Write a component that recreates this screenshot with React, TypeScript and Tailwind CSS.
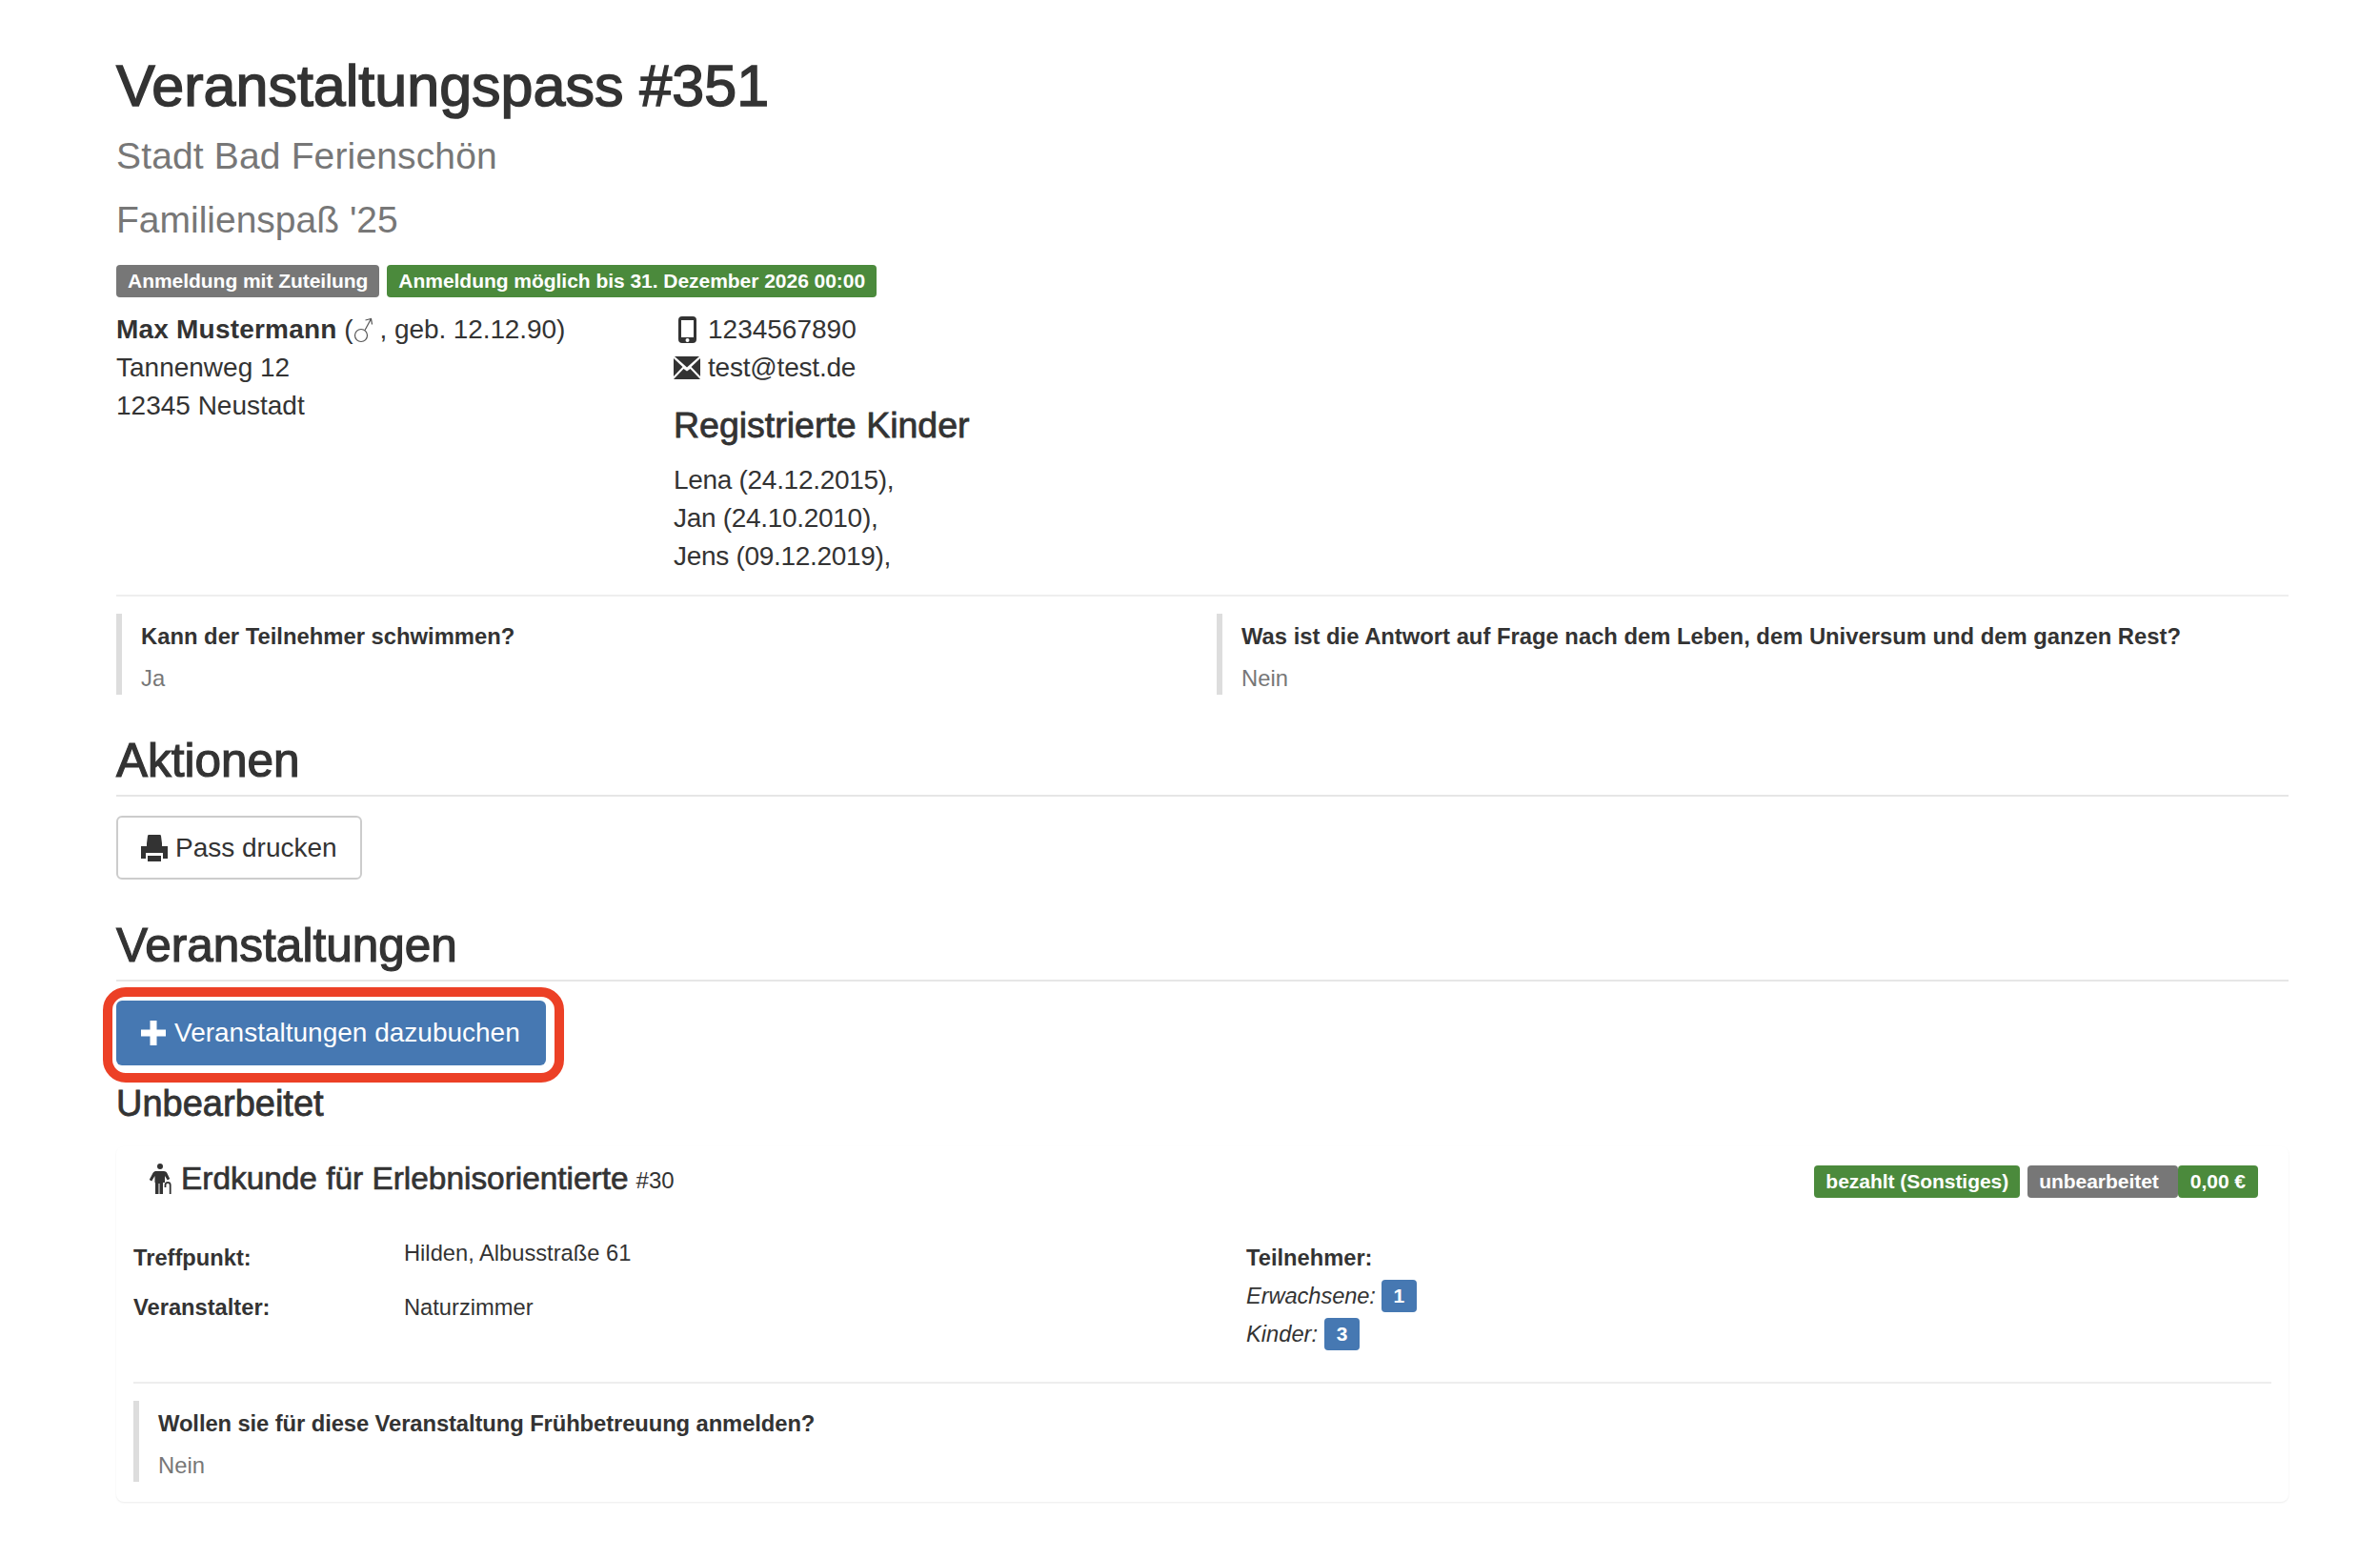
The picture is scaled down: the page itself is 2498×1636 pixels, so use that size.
const sans = "font-['Liberation_Sans',Arial,sans-serif]";

function PhoneIcon() {
    return (
        <svg viewBox="0 0 19 28" className="h-[28px] w-[19px] shrink-0" fill="#333">
            <path
                fillRule="evenodd"
                d="M4 0h11a4 4 0 0 1 4 4v20a4 4 0 0 1-4 4H4a4 4 0 0 1-4-4V4a4 4 0 0 1 4-4zM3 4v18h13V4zM9.500 23a2 2 0 1 0 0 4 2 2 0 0 0 0-4z"
            />
        </svg>
    );
}

function MailIcon() {
    return (
        <svg viewBox="0 0 28 24" className="h-[24px] w-[28px] shrink-0" fill="#333">
            <path d="M1 0h26L14 11.500z" />
            <path d="M0 2v19l9.500-10z" />
            <path d="M28 2v19l-9.500-10z" />
            <path d="M0 24h28L17.500 13 14 15.500 10.500 13z" />
        </svg>
    );
}

function MaleIcon() {
    return (
        <svg viewBox="0 0 20 28" className="inline-block h-[28px] w-[20px] align-[-6px]" fill="none" stroke="#555" strokeWidth="1.200">
            <circle cx="8" cy="19" r="6.500" />
            <path d="M12 13.500 18.500 1.500M12.500 3l6-1.500 1 6" />
        </svg>
    );
}

function PrintIcon() {
    return (
        <svg viewBox="0 0 28 28" className="h-[28px] w-[28px] shrink-0" fill="#333">
            <path d="M8.500 0h11c.8 0 1.400.5 1.500 1.300L22 9v3h6v13h-5v-6H5v6H0V12h6V9l1-7.700C7.100.5 7.700 0 8.500 0z" />
            <path d="M7 22h14v6H7z" />
        </svg>
    );
}

function PlusIcon() {
    return (
        <svg viewBox="0 0 26 26" className="h-[26px] w-[26px] shrink-0" fill="#fff">
            <path d="M9.500 0h7v9.500H26v7h-9.500V26h-7v-9.500H0v-7h9.500z" />
        </svg>
    );
}

function PersonCaneIcon() {
    return (
        <svg viewBox="0 0 24 32" className="h-[32px] w-[24px] shrink-0" fill="#333">
            <circle cx="12" cy="3" r="3" />
            <path d="M8 8h8c1.500 0 2.500.7 3.200 1.800l3 6.200-2.400 1.400L17 13v7h-2v12h-3.500V21h-1v11H7V20H6.500v-7l-3.300 5.400L.8 17l3.800-7.200C5.400 8.600 6.500 8 8 8z" />
            <path d="M17.500 25v-2.500a2.600 2.600 0 0 1 5.200 0V32" fill="none" stroke="#333" strokeWidth="1.800" />
        </svg>
    );
}

function Label({ color, children, className = '' }: { color: string; children: React.ReactNode; className?: string }) {
    return (
        <span className={`flex h-[34px] items-center rounded-[4px] px-[12px] text-[21px] font-bold tracking-[-0.035px] text-white ${color} ${className}`}>
            {children}
        </span>
    );
}

function Question({ title, answer, className = '', titleClassName = '' }: { title: string; answer: string; className?: string; titleClassName?: string }) {
    return (
        <div className={`h-[85px] border-l-[6px] border-[#ddd] pt-[2px] pl-[20px] ${className}`}>
            <div className={`text-[23.800px] leading-[44px] font-bold text-[#333] ${titleClassName}`}>{title}</div>
            <div className="text-[23.800px] leading-[44px] text-[#777]">{answer}</div>
        </div>
    );
}

function SectionHeading({ children }: { children: React.ReactNode }) {
    return (
        <div className="border-b-2 border-[#e6e6e6] pb-[8px]">
            <h2 className="text-[49.500px] leading-[56px] text-[#333] [-webkit-text-stroke:1.200px_#333]">{children}</h2>
        </div>
    );
}

export default function App() {
    return (
        <div className={`min-h-[1636px] bg-white pt-[50px] pr-[96px] pl-[122px] text-[28px] leading-[40px] text-[#333] ${sans}`}>
            <h1 className="text-[61px] leading-[80px] text-[#333] [-webkit-text-stroke:1.500px_#333]">Veranstaltungspass #351</h1>
            <div className="mt-[14px] text-[39px] leading-[40px] tracking-[0.15px] text-[#777]">Stadt Bad Ferienschön</div>
            <div className="mt-[27px] text-[39px] leading-[40px] text-[#777]">Familienspaß '25</div>

            <div className="mt-[27px] flex gap-[8px]">
                <Label color="bg-[#777]">Anmeldung mit Zuteilung</Label>
                <Label color="bg-[#4b8a3c]">Anmeldung möglich bis 31. Dezember 2026 00:00</Label>
            </div>

            <div className="mt-[14px] flex">
                <div className="w-[585px]">
                    <div>
                        <b className="tracking-[0.2px]">Max Mustermann</b> (<MaleIcon /> , <span className="tracking-[-0.1px]">geb. 12.12.90)</span>
                    </div>
                    <div>Tannenweg 12</div>
                    <div>12345 Neustadt</div>
                </div>
                <div>
                    <div className="flex items-center">
                        <span className="ml-[5px] flex w-[31px]">
                            <PhoneIcon />
                        </span>
                        1234567890
                    </div>
                    <div className="flex items-center">
                        <span className="flex w-[36px]">
                            <MailIcon />
                        </span>
                        <span className="tracking-[-0.2px]">test@test.de</span>
                    </div>
                    <h3 className="mt-[20px] text-[37.500px] leading-[40px] [-webkit-text-stroke:0.8px_#333]">Registrierte Kinder</h3>
                    <div className="mt-[18px] tracking-[-0.3px]">Lena (24.12.2015),</div>
                    <div className="tracking-[-0.3px]">Jan (24.10.2010),</div>
                    <div className="tracking-[-0.3px]">Jens (09.12.2019),</div>
                </div>
            </div>

            <div className="mt-[20px] h-[2px] bg-[#eee]" />

            <div className="mt-[18px] flex">
                <Question className="w-[1155px]" title="Kann der Teilnehmer schwimmen?" answer="Ja" />
                <Question title="Was ist die Antwort auf Frage nach dem Leben, dem Universum und dem ganzen Rest?" answer="Nein" />
            </div>

            <div className="mt-[41px]">
                <SectionHeading>Aktionen</SectionHeading>
            </div>
            <button
                type="button"
                className="mt-[20px] flex h-[67px] w-[258px] items-center rounded-[6px] border-2 border-[#ccc] bg-white pl-[24px] text-[#333]"
            >
                <PrintIcon />
                <span className="ml-[8px]">Pass drucken</span>
            </button>

            <div className="mt-[41px]">
                <SectionHeading>Veranstaltungen</SectionHeading>
            </div>

            <div className="relative mt-[20px] w-[451px]">
                <button type="button" className="flex h-[68px] w-[451px] items-center rounded-[6px] bg-[#4678b2] pl-[26px] text-white">
                    <PlusIcon />
                    <span className="ml-[9px]">Veranstaltungen dazubuchen</span>
                </button>
                <div className="absolute -top-[14px] -right-[19px] -bottom-[18px] -left-[14px] rounded-[24px] border-[10px] border-[#ec4026]" />
            </div>

            <h3 className="mt-[20px] text-[38px] leading-[40px] [-webkit-text-stroke:0.8px_#333]">Unbearbeitet</h3>

            <div className="mt-[25px] h-[373px] rounded-[8px] px-[18px] pt-[14px] shadow-[0_1px_2px_rgba(0,0,0,0.08)]">
                <div className="flex h-[40px] items-center justify-between pr-[14px]">
                    <div className="flex items-center pl-[16px]">
                        <PersonCaneIcon />
                        <span className="ml-[10px] text-[33.400px] leading-[40px] [-webkit-text-stroke:0.7px_#333]">Erdkunde für Erlebnisorientierte</span>
                        <span className="ml-[8px] translate-y-[2px] text-[24px]">#30</span>
                    </div>
                    <div className="mt-[6px] flex">
                        <Label color="bg-[#4b8a3c]" className="mr-[8px]">bezahlt (Sonstiges)</Label>
                        <Label color="bg-[#777]" className="pr-[20px]">unbearbeitet</Label>
                        <Label color="bg-[#4b8a3c]" className="px-[13px]">0,00 €</Label>
                    </div>
                </div>

                <div className="mt-[41px] flex h-[152px] text-[23.700px] leading-[34px]">
                    <div className="w-[1168px]">
                        <div className="flex">
                            <b className="mt-[5px] w-[284px]">Treffpunkt:</b>
                            <span>Hilden, Albusstraße 61</span>
                        </div>
                        <div className="mt-[18px] flex">
                            <b className="w-[284px]">Veranstalter:</b>
                            <span>Naturzimmer</span>
                        </div>
                    </div>
                    <div className="pt-[5px]">
                        <b>Teilnehmer:</b>
                        <div className="mt-[6px] flex items-center italic">
                            <span className="tracking-[-0.1px]">Erwachsene:</span>
                            <span className="ml-[6px] flex h-[34px] w-[37px] items-center justify-center rounded-[4px] bg-[#4678b2] text-[21px] font-bold text-white not-italic">1</span>
                        </div>
                        <div className="mt-[6px] flex items-center italic">
                            Kinder:
                            <span className="ml-[7px] flex h-[34px] w-[37px] items-center justify-center rounded-[4px] bg-[#4678b2] text-[21px] font-bold text-white not-italic">3</span>
                        </div>
                    </div>
                </div>

                <div className="h-[2px] bg-[#eee]" />
                <Question
                    className="mt-[18px]"
                    titleClassName="tracking-[-0.1px]"
                    title="Wollen sie für diese Veranstaltung Frühbetreuung anmelden?"
                    answer="Nein"
                />
            </div>
        </div>
    );
}
